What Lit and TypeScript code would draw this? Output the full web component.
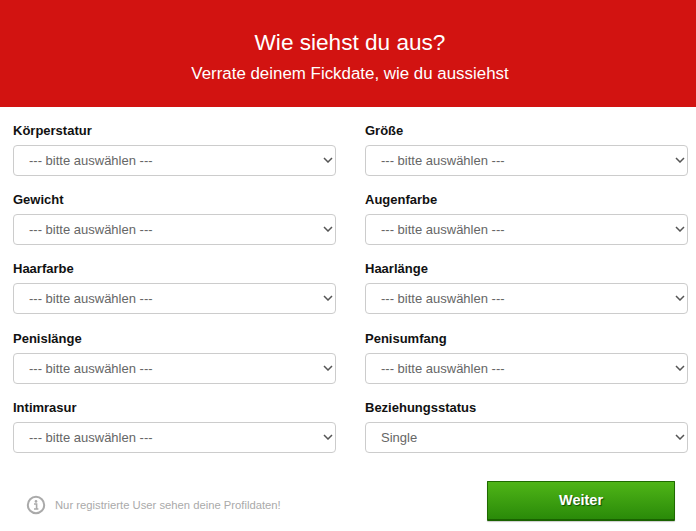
import { LitElement, html, css } from "lit";
import { customElement } from "lit/decorators.js";

const FIELDS: [string, string][] = [
  ["Körperstatur", ""], ["Größe", ""],
  ["Gewicht", ""], ["Augenfarbe", ""],
  ["Haarfarbe", ""], ["Haarlänge", ""],
  ["Penislänge", ""], ["Penisumfang", ""],
  ["Intimrasur", ""], ["Beziehungsstatus", "Single"],
];

@customElement("app-root")
export class AppRoot extends LitElement {
  static styles = css`
    :host { display: block; width: 696px; height: 531px; overflow: hidden; background: #fff; font-family: "Liberation Sans", Arial, sans-serif; }
    .head { height: 107px; box-sizing: border-box; background: #d21311; color: #fff; text-align: center; padding: 29px 0 0 4px; }
    h1 { margin: 0; font-size: 22.6px; line-height: 28px; font-weight: 400; }
    .sub { margin-top: 7px; font-size: 16.9px; line-height: 20px; }
    .grid { display: grid; grid-template-columns: 323px 323px; column-gap: 29px; row-gap: 16.2px; padding: 16px 0 0 13px; }
    .field { display: flex; flex-direction: column; gap: 6px; }
    label { font-size: 13px; line-height: 16px; font-weight: 700; color: #111; height: 16px; }
    .wrap { position: relative; height: 31px; }
    select { appearance: none; -webkit-appearance: none; display: block; width: 100%; height: 31px; box-sizing: border-box; padding: 0 24px 0 15px; border: 1px solid #ccc; border-radius: 4px; background-color: #fff; font: 13px "Liberation Sans", Arial, sans-serif; color: #666; outline: none; }
    .chev { position: absolute; right: 3px; top: 12px; pointer-events: none; }
    .foot { display: flex; align-items: center; justify-content: space-between; padding: 28px 21px 0 26px; }
    .note { display: flex; align-items: center; gap: 9px; font-size: 11.25px; color: #aaa; margin-top: 8px; }
    .note svg { display: block; }
    .btn { width: 188px; height: 40px; box-sizing: border-box; border: 1px solid #1f6a00; border-bottom: 2px solid #1a6200; border-radius: 1px; background: linear-gradient(#4fb517, #2a8a09); color: #fff; font: 700 14.5px "Liberation Sans", Arial, sans-serif; text-shadow: 1px 1px 1px rgba(0,60,0,.8); box-shadow: 0 1px 1px rgba(0,0,0,.2); padding: 0; }
  `;

  render() {
    return html`
      <div class="head">
        <h1>Wie siehst du aus?</h1>
        <div class="sub">Verrate deinem Fickdate, wie du aussiehst</div>
      </div>
      <div class="grid">
        ${FIELDS.map(([name, value]) => html`
          <div class="field">
            <label>${name}</label>
            <div class="wrap">
              <select>
                <option>${value || "--- bitte auswählen ---"}</option>
              </select>
              <svg class="chev" width="10" height="6" viewBox="0 0 10 6" fill="none">
                <path d="M1 1l4 4 4-4" stroke="#555" stroke-width="1.5"/>
              </svg>
            </div>
          </div>`)}
      </div>
      <div class="foot">
        <div class="note">
          <svg width="20" height="20" viewBox="0 0 20 20" fill="none">
            <circle cx="10" cy="10" r="8.2" stroke="#aaa" stroke-width="2"/>
            <circle cx="10" cy="6.4" r="1.3" fill="#aaa"/>
            <path d="M8 9h2.6v4.6M8 14h4.4" stroke="#aaa" stroke-width="1.6"/>
          </svg>
          <span>Nur registrierte User sehen deine Profildaten!</span>
        </div>
        <button class="btn">Weiter</button>
      </div>
    `;
  }
}
